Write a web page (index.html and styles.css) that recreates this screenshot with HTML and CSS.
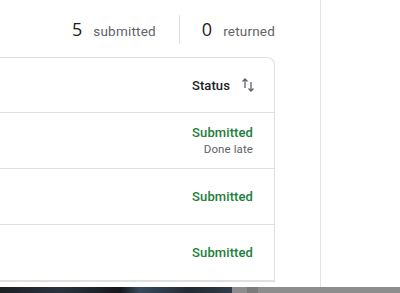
FILE: index.html
```html
<!DOCTYPE html>
<html lang="en">
<head>
  <meta charset="UTF-8" />
  <title>Student work</title>
  <link rel="stylesheet" href="styles.css">
</head>
<body>
  <div class="page">
    <div class="main">
      <div class="stats">
        <div class="stat"><span class="stat-num">5</span><span class="stat-label">submitted</span></div>
        <div class="stat-divider"></div>
        <div class="stat"><span class="stat-num">0</span><span class="stat-label">returned</span></div>
      </div>

      <div class="card">
        <div class="row head">
          <span class="head-title">Status</span>
          <svg class="sort-icon" width="14" height="16" viewBox="0 0 14 16">
            <path d="M4 2 L4 11 M1.5 4.5 L4 2 L6.5 4.5" fill="none" stroke="#5f6368" stroke-width="1.3"/>
            <path d="M10 5 L10 14 M7.5 11.5 L10 14 L12.5 11.5" fill="none" stroke="#5f6368" stroke-width="1.3"/>
          </svg>
        </div>
        <div class="row">
          <div class="status">
            <div class="status-text">Submitted</div>
            <div class="status-note">Done late</div>
          </div>
        </div>
        <div class="row">
          <div class="status"><div class="status-text">Submitted</div></div>
        </div>
        <div class="row">
          <div class="status"><div class="status-text">Submitted</div></div>
        </div>
      </div>
    </div>
    <div class="side"></div>
  </div>
  <div class="taskbar"></div>
</body>
</html>
```

FILE: styles.css
```css
* {
  margin: 0;
  padding: 0;
  box-sizing: border-box;
  font-family: Roboto, 'Liberation Sans', sans-serif;
}

body {
  background-color: #fff;
  color: #202124;
  width: 400px;
  height: 293px;
  overflow: hidden;
}

.page {
  display: flex;
  height: 287px;
}

.main {
  width: 321px;
  border-right: 1px solid #e3e3e3;
  padding-right: 45px;
}

.side {
  flex: 1;
}

.stats {
  height: 57px;
  display: flex;
  justify-content: flex-end;
  align-items: center;
  padding-top: 1px;
}

.stat {
  display: flex;
  align-items: baseline;
}

.stat-num {
  font-family: 'Open Sans', Roboto, sans-serif;
  font-size: 18px;
  color: #202124;
  margin-right: 11px;
}

.stat-label {
  font-size: 13.5px;
  color: #5f6368;
  letter-spacing: 0.2px;
}

.stat-divider {
  width: 1px;
  height: 29px;
  background-color: #e0e0e0;
  margin: 0 22px 0 23px;
}

.card {
  border: 1px solid #e0e0e0;
  border-left: none;
  border-top-right-radius: 8px;
}

.row {
  height: 56px;
  display: flex;
  justify-content: flex-end;
  align-items: center;
  padding-right: 21px;
  border-bottom: 1px solid #e0e0e0;
}

.row.head {
  height: 55px;
  padding-right: 19px;
}

.head-title {
  font-size: 13px;
  font-weight: 500;
  color: #202124;
  margin-right: 11px;
  letter-spacing: 0.1px;
}

.sort-icon {
  display: block;
}

.status {
  text-align: right;
}

.status-text {
  font-size: 13px;
  font-weight: 500;
  color: #188038;
  letter-spacing: 0.1px;
}

.status-note {
  font-size: 11.5px;
  color: #5f6368;
  margin-top: 2px;
  letter-spacing: 0.1px;
}

.taskbar {
  height: 6px;
  background: linear-gradient(to right,
    #1b1f24 0, #2a3440 60px, #15181c 120px, #3a4a5c 140px, #222a33 190px, #303c48 232px,
    #8d8d8d 232px, #8d8d8d 247px, #7b7b7b 247px, #7b7b7b 258px, #8d8d8d 258px);
}
```
